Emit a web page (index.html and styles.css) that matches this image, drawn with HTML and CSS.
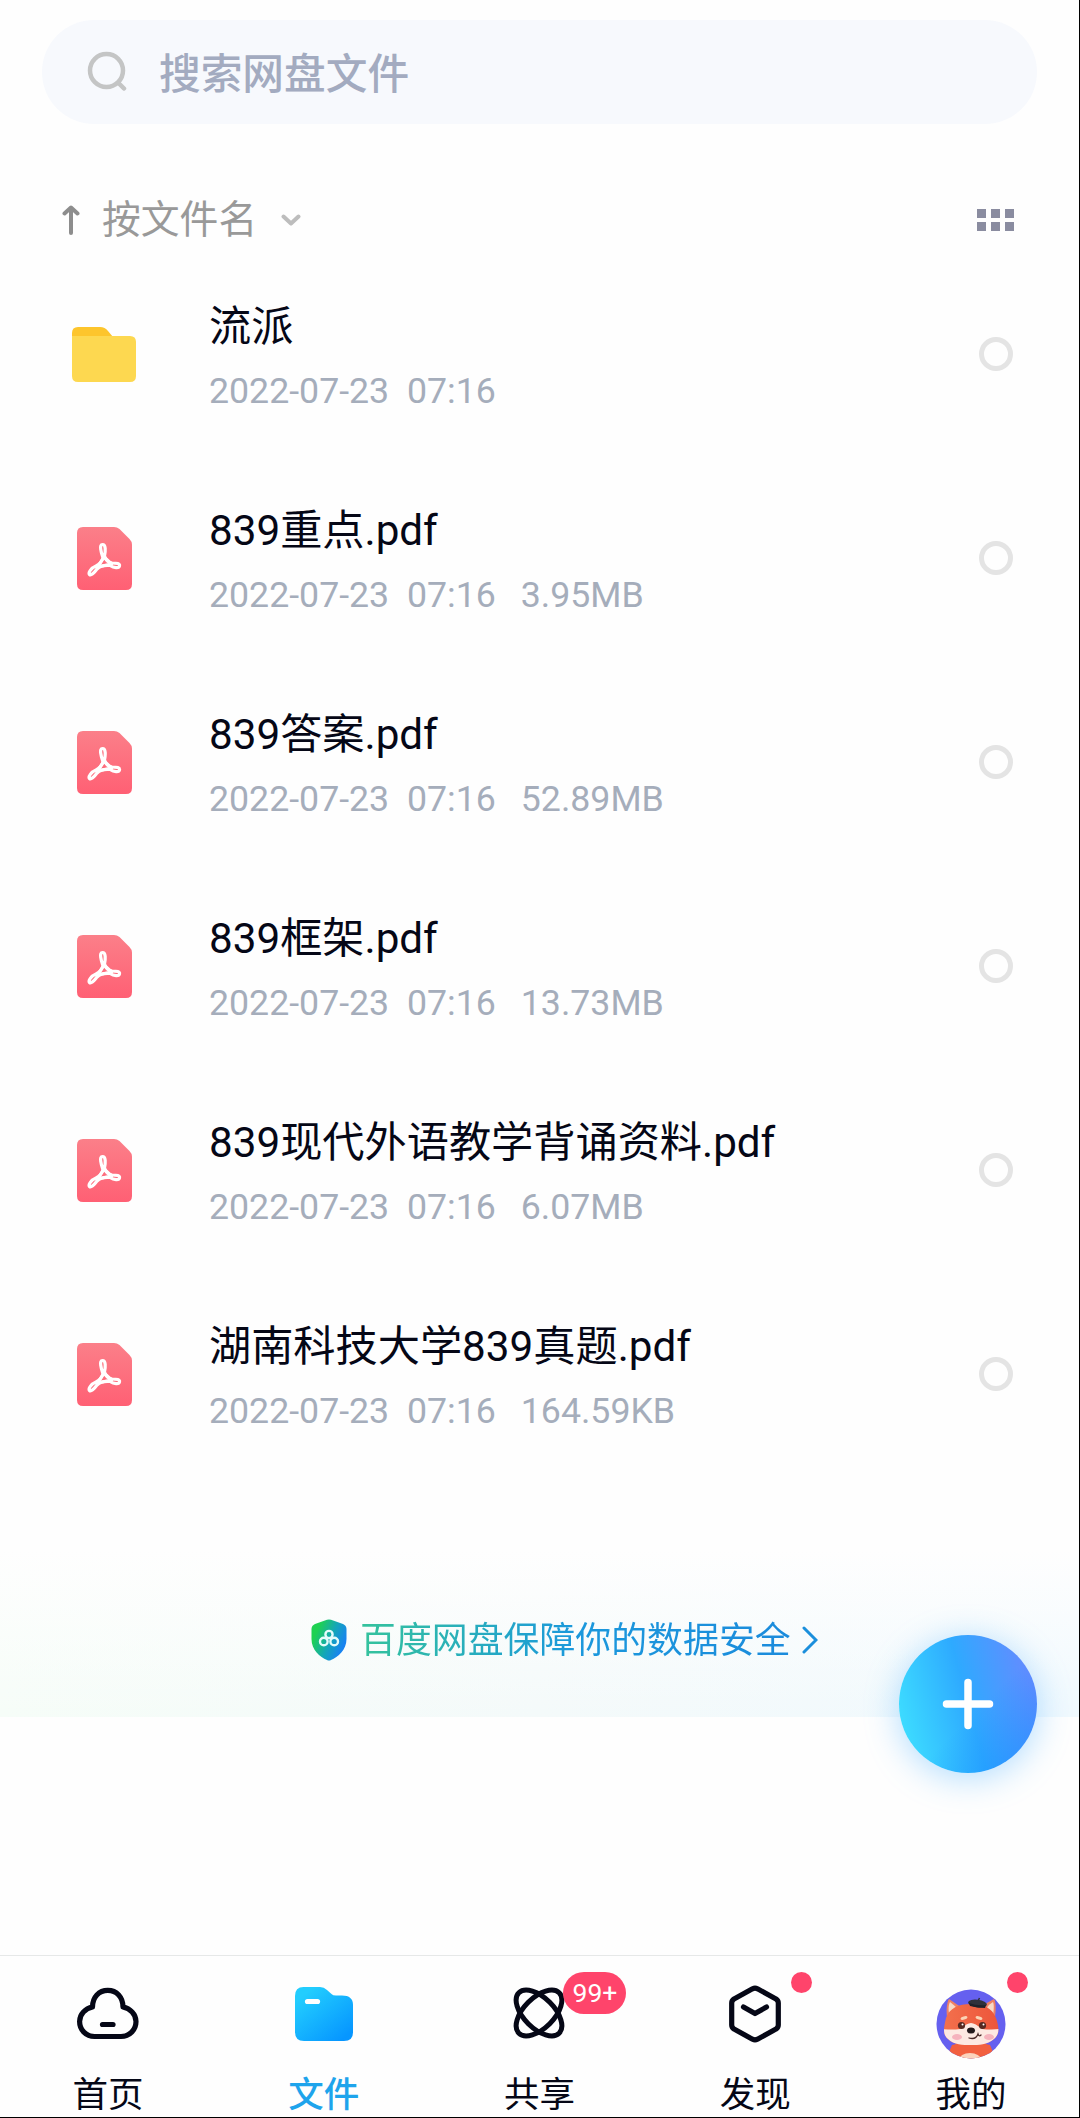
FILE: index.html
```
<!DOCTYPE html>
<html lang="zh-CN">
<head>
    <meta charset="UTF-8">
    <meta name="viewport" content="width=device-width, initial-scale=1.0">
    <title>百度网盘</title>
    <link rel="stylesheet" href="styles.css">
</head>
<body>
    <!-- shared icons -->
    <svg class="defs" width="0" height="0">
        <defs>
            <linearGradient id="pdf-bg" x1="0" y1="0" x2="0" y2="1">
                <stop offset="0" stop-color="#fb7f89"/>
                <stop offset="1" stop-color="#ff6074"/>
            </linearGradient>
        </defs>
        <symbol id="pdf" viewBox="0 0 55 63">
            <path fill="url(#pdf-bg)" d="M6 0H37Q40 0 42.500 2L52.500 12Q55 14.500 55 17.500V57Q55 63 49 63H6Q0 63 0 57V6Q0 0 6 0Z"/>
            <g fill="none" stroke="#fff" stroke-width="3.200" stroke-linejoin="round">
                <path d="M26 31C24 25 22 17.500 25.500 17.500S28.500 24 27.500 29C29 34 31 35 35 36C40 36 43 36.500 42.500 39S37 41 33 38.500C28 38 23 39 20 42C17 46 14 49 12.500 47.500S14 41 19 39C23 37 25 34 26 31Z"/>
                <path d="M27 30L20.500 40L34.500 37Z"/>
            </g>
        </symbol>
    </svg>

    <div class="page">
        <div class="search">
            <svg class="search-icon" width="40" height="42" viewBox="0 0 40 42" fill="none" stroke="#c4c5c5" stroke-width="4.500" stroke-linecap="round">
                <circle cx="19.500" cy="19.500" r="16.500"/>
                <path d="M32 32.500L37 37.500"/>
            </svg>
            <span>搜索网盘文件</span>
        </div>

        <div class="sort-bar">
            <svg width="18" height="30" viewBox="0 0 18 30" fill="none" stroke="#8d8d8d" stroke-width="4" stroke-linecap="round" stroke-linejoin="round">
                <path d="M9 28V3M2.500 8.500L9 2.500L15.500 8.500"/>
            </svg>
            <span class="sort-name">按文件名</span>
            <svg width="20" height="13" viewBox="0 0 20 13" fill="none" stroke="#bdbdbd" stroke-width="4" stroke-linecap="round" stroke-linejoin="round">
                <path d="M2.500 2.500L10 9.500L17.500 2.500"/>
            </svg>
            <div class="grid-icon"><i></i><i></i><i></i><i></i><i></i><i></i></div>
        </div>

        <div class="file-list">
            <div class="file">
                <div class="file-icon">
                    <svg width="64" height="55" viewBox="0 0 64 55">
                        <path fill="#fdc52c" d="M6 0H28Q33 0 36 4L41 10V30H0V6Q0 0 6 0Z"/>
                        <path fill="#fdd850" d="M0 9H58Q64 9 64 15V49Q64 55 58 55H6Q0 55 0 49Z"/>
                    </svg>
                </div>
                <div class="info">
                    <div class="name">流派</div>
                    <div class="meta"><span>2022-07-23&nbsp; 07:16</span></div>
                </div>
                <div class="radio"></div>
            </div>
            <div class="file">
                <div class="file-icon"><svg width="55" height="63"><use href="#pdf"/></svg></div>
                <div class="info">
                    <div class="name">839重点.pdf</div>
                    <div class="meta"><span>2022-07-23&nbsp; 07:16</span><span>3.95MB</span></div>
                </div>
                <div class="radio"></div>
            </div>
            <div class="file">
                <div class="file-icon"><svg width="55" height="63"><use href="#pdf"/></svg></div>
                <div class="info">
                    <div class="name">839答案.pdf</div>
                    <div class="meta"><span>2022-07-23&nbsp; 07:16</span><span>52.89MB</span></div>
                </div>
                <div class="radio"></div>
            </div>
            <div class="file">
                <div class="file-icon"><svg width="55" height="63"><use href="#pdf"/></svg></div>
                <div class="info">
                    <div class="name">839框架.pdf</div>
                    <div class="meta"><span>2022-07-23&nbsp; 07:16</span><span>13.73MB</span></div>
                </div>
                <div class="radio"></div>
            </div>
            <div class="file">
                <div class="file-icon"><svg width="55" height="63"><use href="#pdf"/></svg></div>
                <div class="info">
                    <div class="name">839现代外语教学背诵资料.pdf</div>
                    <div class="meta"><span>2022-07-23&nbsp; 07:16</span><span>6.07MB</span></div>
                </div>
                <div class="radio"></div>
            </div>
            <div class="file">
                <div class="file-icon"><svg width="55" height="63"><use href="#pdf"/></svg></div>
                <div class="info">
                    <div class="name">湖南科技大学839真题.pdf</div>
                    <div class="meta"><span>2022-07-23&nbsp; 07:16</span><span>164.59KB</span></div>
                </div>
                <div class="radio"></div>
            </div>
        </div>

        <div class="safety">
            <svg width="36" height="42" viewBox="0 0 36 42">
                <defs>
                    <linearGradient id="shield" x1="0" y1="0.200" x2="1" y2="0.700">
                        <stop offset="0.150" stop-color="#1fd152"/>
                        <stop offset="0.550" stop-color="#14a6b8"/>
                        <stop offset="0.900" stop-color="#1883f0"/>
                    </linearGradient>
                </defs>
                <path fill="url(#shield)" d="M16 0.800Q18 0 20 0.800L32 5Q35.500 6.500 35.500 10V20C35.500 31 27 38 20 41Q18 42 16 41C9 38 0.500 31 0.500 20V10Q0.500 6.500 4 5Z"/>
                <g fill="none" stroke="#e4fbfa" stroke-width="2.400">
                    <circle cx="18" cy="15.500" r="3.600"/>
                    <circle cx="12.800" cy="22.500" r="3.800"/>
                    <circle cx="23.200" cy="22.500" r="3.800"/>
                </g>
            </svg>
            <span class="safety-text">百度网盘保障你的数据安全</span>
            <svg width="16" height="28" viewBox="0 0 16 28" fill="none" stroke="#1b8fdc" stroke-width="3" stroke-linecap="round">
                <path d="M2 2L14 14L2 26"/>
            </svg>
        </div>

        <div class="fab">
            <svg width="52" height="52" viewBox="0 0 52 52" stroke="#fff" stroke-width="7.500" stroke-linecap="round">
                <path d="M26 4.500V47.500M4.500 26H47.500"/>
            </svg>
        </div>

        <div class="tabs">
            <div class="tab">
                <div class="tab-icon">
                    <svg width="64" height="56" viewBox="0 0 64 56" fill="none" stroke="#050716" stroke-width="5.200" stroke-linecap="round" stroke-linejoin="round">
                        <path d="M16.500 21C16.500 11 23 4.300 31.800 4.300S47 11 47 21C54 22.500 60 28 60 35.500C60 44 53.500 50.500 45 50.500H18.500C10 50.500 3.600 44 3.600 35.500C3.600 28 9.500 22.500 16.500 21Z"/>
                        <path d="M26.500 38.500H37"/>
                    </svg>
                </div>
                <span>首页</span>
            </div>
            <div class="tab active">
                <div class="tab-icon">
                    <svg width="58" height="54" viewBox="0 0 58 54">
                        <defs>
                            <linearGradient id="tab-folder" x1="0.200" y1="0.100" x2="0.900" y2="0.900">
                                <stop offset="0" stop-color="#22cdfe"/>
                                <stop offset="1" stop-color="#0696ff"/>
                            </linearGradient>
                        </defs>
                        <path fill="url(#tab-folder)" d="M8.500 0H25Q29 0 32 3L36.500 7Q38 8.500 41 8.500H47Q58 8.500 58 18V45.500Q58 54 49 54H9Q0 54 0 45V9Q0 0 8.500 0Z"/>
                        <path d="M12.500 14.500H22.500" stroke="#fff" stroke-width="5.200" stroke-linecap="round"/>
                    </svg>
                </div>
                <span>文件</span>
            </div>
            <div class="tab">
                <div class="tab-icon">
                    <svg width="54" height="54" viewBox="0 0 54 54" fill="none" stroke="#050716" stroke-width="5">
                        <ellipse cx="27" cy="26" rx="28.500" ry="15.200" transform="rotate(45 27 26)"/>
                        <ellipse cx="27" cy="26" rx="28.500" ry="15.200" transform="rotate(-45 27 26)"/>
                    </svg>
                    <span class="badge">99+</span>
                </div>
                <span>共享</span>
            </div>
            <div class="tab">
                <div class="tab-icon">
                    <svg width="54" height="58" viewBox="0 0 54 58" fill="none" stroke="#050716" stroke-width="5.200" stroke-linecap="round" stroke-linejoin="round">
                        <path d="M24.500 3.800Q27 2.600 29.500 3.800L48 14Q50.300 15.500 50.300 18V40Q50.300 42.500 48 44L29.500 54.200Q27 55.400 24.500 54.200L6 44Q3.700 42.500 3.700 40V18Q3.700 15.500 6 14Z"/>
                        <path d="M15.500 22L27 28.500L38.500 22"/>
                    </svg>
                    <i class="dot"></i>
                </div>
                <span>发现</span>
            </div>
            <div class="tab">
                <div class="tab-icon">
                    <svg class="avatar" width="70" height="70" viewBox="0 0 70 70">
                        <defs>
                            <clipPath id="round"><circle cx="35" cy="35" r="34.500"/></clipPath>
                            <clipPath id="face"><path d="M35 15C48 15 56 19 60 29C63 38 64 45 58 50C51 56 43 56 35 56S18 56 12 50C6 45 8 38 10 29C14 19 22 15 35 15Z"/></clipPath>
                            <linearGradient id="fur" x1="0" y1="0" x2="1" y2="0">
                                <stop offset="0" stop-color="#f4744f"/>
                                <stop offset="1" stop-color="#ec5238"/>
                            </linearGradient>
                        </defs>
                        <g clip-path="url(#round)">
                            <rect width="70" height="70" fill="#6560ef"/>
                            <path fill="#f2603f" d="M16 56Q35 50 54 56L60 70H10Z"/>
                            <ellipse cx="34" cy="71" rx="11" ry="7" fill="#fbd3bd"/>
                            <path fill="#ee8064" d="M11 28C10 20 11 13 13 10Q19 14 26 19Z"/>
                            <path fill="#f8d9c5" d="M13 24C12 18 13 15 14 13Q18 16 22 20Z"/>
                            <path fill="#ee8064" d="M59 28C60 20 60 13 58 10Q51 13 45 19Z"/>
                            <path fill="#f8d9c5" d="M57 26C58 20 58 15 57 13Q53 15 50 20Z"/>
                            <g clip-path="url(#face)">
                                <rect width="70" height="60" fill="url(#fur)"/>
                                <path fill="#fde9e2" d="M6 40Q16 41 24 40Q31 34 35 34T46 40Q56 41 64 40V60H6Z"/>
                            </g>
                            <ellipse cx="21" cy="48" rx="5" ry="3" fill="#f6b3bd"/>
                            <ellipse cx="53" cy="48" rx="5" ry="3" fill="#f6b3bd"/>
                            <ellipse cx="28" cy="29" rx="3.500" ry="1.600" fill="#fbd3b4" transform="rotate(-15 28 29)"/>
                            <ellipse cx="43" cy="29" rx="3.500" ry="1.600" fill="#fbd3b4" transform="rotate(15 43 29)"/>
                            <circle cx="25.500" cy="36.500" r="3.600" fill="#572a22"/>
                            <circle cx="46.500" cy="36.500" r="3.600" fill="#572a22"/>
                            <circle cx="26.500" cy="35.500" r="1" fill="#fff"/>
                            <circle cx="47.500" cy="35.500" r="1" fill="#fff"/>
                            <ellipse cx="35" cy="41.500" rx="4" ry="3" fill="#241a1c"/>
                            <path d="M33 49Q40 51 42 45Q43 48 45 46" fill="none" stroke="#4b2a28" stroke-width="1.300" stroke-linecap="round"/>
                            <ellipse cx="41.500" cy="14.500" rx="9.500" ry="3.800" fill="#30313b" transform="rotate(8 41.500 14.500)"/>
                            <path d="M33 14Q41 17 50 16L49 19Q41 19 34 17Z" fill="#20212a"/>
                            <path d="M42 12L43.500 9" stroke="#30313b" stroke-width="1.500"/>
                        </g>
                    </svg>
                    <i class="dot"></i>
                </div>
                <span>我的</span>
            </div>
        </div>
    </div>
</body>
</html>
```

FILE: styles.css
```
* {
    box-sizing: border-box;
}
body {
    margin: 0;
    background: #fefefe;
    font-family: Roboto, "Noto Sans CJK SC", sans-serif;
    color: #050716;
}
svg {
    display: block;
    flex: none;
}
.defs {
    position: absolute;
}
.page {
    position: relative;
    display: flex;
    flex-direction: column;
    width: 1080px;
    height: 2118px;
    border-right: 1px solid #000;
    border-bottom: 1px solid #000;
    overflow: hidden;
}

/* search + sort */
.search {
    display: flex;
    align-items: center;
    gap: 32px;
    height: 104px;
    margin: 20px 42px 0;
    padding-left: 45px;
    border-radius: 52px;
    background: #f7f9fd;
    color: #a3abc0;
    font-size: 41.7px;
    font-weight: 500;
    line-height: 60px;
}
.search span {
    padding-top: 6px;
}
.sort-bar {
    display: flex;
    align-items: center;
    height: 128px;
    padding: 64px 65px 0 62px;
    color: #999;
    font-size: 38.8px;
    line-height: 64px;
}
.sort-name {
    margin: 0 24px 0 22px;
}
.grid-icon {
    display: grid;
    grid-template-columns: repeat(3, 9px);
    gap: 4px 5px;
    margin-left: auto;
}
.grid-icon i {
    height: 9px;
    background: #8a8ca0;
}

/* files */
.file {
    display: flex;
    align-items: center;
    height: 204px;
    padding: 0 66px 0 72px;
}
.file-icon {
    display: flex;
    justify-content: center;
    width: 64px;
    margin-right: 73px;
}
.info {
    flex: 1;
    padding-top: 5px;
}
.name {
    font-size: 42.2px;
    line-height: 60px;
}
.meta {
    display: flex;
    gap: 25px;
    margin-top: 9px;
    color: #a5adbb;
    font-size: 35.7px;
    line-height: 50px;
}
.radio {
    width: 34px;
    height: 34px;
    border: 5px solid #e4e4e4;
    border-radius: 50%;
}

/* safety banner */
.safety {
    display: flex;
    align-items: center;
    height: 167px;
    margin-top: 74px;
    padding: 12px 0 0 311px;
    background: linear-gradient(to bottom, #fefefe, rgba(254, 254, 254, 0)), linear-gradient(to right, #f6fdf8, #f4fafa 50%, #f0f9fe);
}
.safety-text {
    margin: 0 11px 0 13px;
    background: linear-gradient(to right, #35c39c, #1b98dc 50%, #1b8bdc);
    -webkit-background-clip: text;
    background-clip: text;
    color: transparent;
    font-size: 35.9px;
    line-height: 54px;
    padding-top: 2px;
}
.fab {
    position: absolute;
    top: 1635px;
    left: 899px;
    display: flex;
    align-items: center;
    justify-content: center;
    width: 138px;
    height: 138px;
    border-radius: 50%;
    background: linear-gradient(to top left, rgba(20, 140, 255, 0.6), rgba(20, 140, 255, 0) 45%), linear-gradient(75deg, #3ee0ff 5%, #2eaaff 50%, #6a88ff 95%);
    box-shadow: 0 5px 34px rgba(60, 170, 255, 0.4);
}

/* bottom tabs */
.tabs {
    display: flex;
    height: 162px;
    margin-top: auto;
    border-top: 1px solid #e6e8e8;
}
.tab {
    display: flex;
    flex: 1;
    flex-direction: column;
    align-items: center;
    font-size: 35.5px;
    line-height: 50px;
}
.tab-icon {
    position: relative;
    display: flex;
    align-items: center;
    justify-content: center;
    width: 70px;
    height: 54px;
    margin: 31px 0 29px;
}
.avatar {
    margin-top: 20px;
}
.active {
    color: #1ea4ec;
    font-weight: 500;
}
.badge {
    position: absolute;
    top: -15px;
    left: 59px;
    width: 63px;
    height: 42px;
    border-radius: 21px;
    background: #ff446b;
    color: #fff;
    font-size: 26.5px;
    line-height: 42px;
    text-align: center;
}
.dot {
    position: absolute;
    top: -15px;
    left: 71px;
    width: 21px;
    height: 21px;
    border-radius: 50%;
    background: #ff446b;
}
```
